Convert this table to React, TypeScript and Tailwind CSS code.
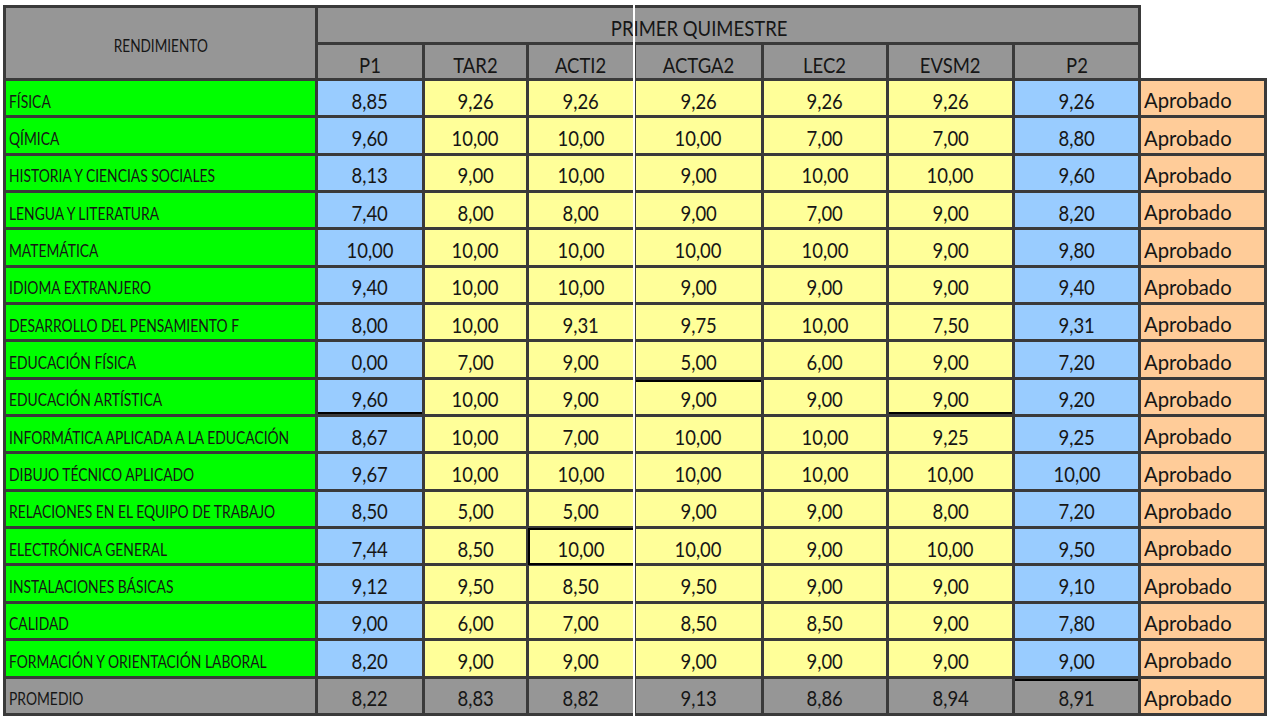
import React from 'react';

const rows: string[][] = [
  ['FÍSICA', '8,85', '9,26', '9,26', '9,26', '9,26', '9,26', '9,26'],
  ['QÍMICA', '9,60', '10,00', '10,00', '10,00', '7,00', '7,00', '8,80'],
  ['HISTORIA Y CIENCIAS SOCIALES', '8,13', '9,00', '10,00', '9,00', '10,00', '10,00', '9,60'],
  ['LENGUA Y LITERATURA', '7,40', '8,00', '8,00', '9,00', '7,00', '9,00', '8,20'],
  ['MATEMÁTICA', '10,00', '10,00', '10,00', '10,00', '10,00', '9,00', '9,80'],
  ['IDIOMA EXTRANJERO', '9,40', '10,00', '10,00', '9,00', '9,00', '9,00', '9,40'],
  ['DESARROLLO DEL PENSAMIENTO F', '8,00', '10,00', '9,31', '9,75', '10,00', '7,50', '9,31'],
  ['EDUCACIÓN FÍSICA', '0,00', '7,00', '9,00', '5,00', '6,00', '9,00', '7,20'],
  ['EDUCACIÓN ARTÍSTICA', '9,60', '10,00', '9,00', '9,00', '9,00', '9,00', '9,20'],
  ['INFORMÁTICA APLICADA A LA EDUCACIÓN', '8,67', '10,00', '7,00', '10,00', '10,00', '9,25', '9,25'],
  ['DIBUJO TÉCNICO APLICADO', '9,67', '10,00', '10,00', '10,00', '10,00', '10,00', '10,00'],
  ['RELACIONES EN EL EQUIPO DE TRABAJO', '8,50', '5,00', '5,00', '9,00', '9,00', '8,00', '7,20'],
  ['ELECTRÓNICA GENERAL', '7,44', '8,50', '10,00', '10,00', '9,00', '10,00', '9,50'],
  ['INSTALACIONES BÁSICAS', '9,12', '9,50', '8,50', '9,50', '9,00', '9,00', '9,10'],
  ['CALIDAD', '9,00', '6,00', '7,00', '8,50', '8,50', '9,00', '7,80'],
  ['FORMACIÓN Y ORIENTACIÓN LABORAL', '8,20', '9,00', '9,00', '9,00', '9,00', '9,00', '9,00'],
];

const promedio = ['8,22', '8,83', '8,82', '9,13', '8,86', '8,94', '8,91'];
const heads = ['P1', 'TAR2', 'ACTI2', 'ACTGA2', 'LEC2', 'EVSM2', 'P2'];

const cell = 'border-[3px] border-[#3a3a3a] p-0 leading-none whitespace-nowrap overflow-hidden';

// leftover cell-selection marks from the spreadsheet
function mark(i: number, j: number) {
  if (i === 12 && j === 2) return 'outline-2 -outline-offset-2 outline-black';
  if (i === 8 && j === 3) return 'shadow-[inset_0_2px_0_#000]';
  if (i === 8 && (j === 0 || j === 5)) return 'shadow-[inset_0_-2px_0_#000]';
  return '';
}

// narrow, Calibri-like text: Lato squeezed horizontally
function Sq({ children }: { children: React.ReactNode }) {
  return <span className="inline-block origin-center scale-x-[0.84]">{children}</span>;
}

function Label({ text }: { text: string }) {
  return <span className="inline-block origin-left scale-x-[0.77]">{text}</span>;
}

function Status() {
  return (
    <td className={`${cell} bg-[#ffcc99] pl-[3px] pt-[4px] text-left text-[22px]`}>
      <span className="inline-block origin-left scale-x-[0.92]">Aprobado</span>
    </td>
  );
}

export default function App() {
  return (
    <div className="relative h-[720px] w-[1280px] overflow-hidden bg-white pl-[3px] pt-[5px] font-['Lato',sans-serif] text-[#161616]">
      <table className="w-[1261px] table-fixed border-collapse">
        <colgroup>
          <col className="w-[312px]" />
          <col className="w-[107px]" />
          <col className="w-[104px]" />
          <col className="w-[107px]" />
          <col className="w-[128px]" />
          <col className="w-[125px]" />
          <col className="w-[126px]" />
          <col className="w-[126px]" />
          <col className="w-[126px]" />
        </colgroup>
        <thead>
          <tr className="h-[37px]">
            <th rowSpan={2} className={`${cell} bg-[#969696] pt-[4px] text-[17px] font-normal`}>
              <span className="inline-block scale-x-[0.8]">RENDIMIENTO</span>
            </th>
            <th colSpan={7} className={`${cell} bg-[#969696] pr-[58px] pt-[5px] text-[22px] font-normal`}>
              <Sq>PRIMER QUIMESTRE</Sq>
            </th>
            <th className="p-0" />
          </tr>
          <tr className="h-[36px]">
            {heads.map((h) => (
              <th key={h} className={`${cell} bg-[#969696] pt-[6px] text-[22px] font-normal`}>
                <Sq>{h}</Sq>
              </th>
            ))}
            <th className="p-0" />
          </tr>
        </thead>
        <tbody>
          {rows.map((r, i) => (
            <tr key={r[0]} className="h-[37.35px]">
              <td className={`${cell} bg-[#00ff00] pl-[3px] pt-[5px] text-left text-[18px]`}>
                <Label text={r[0]} />
              </td>
              {r.slice(1).map((v, j) => (
                <td
                  key={j}
                  className={`${cell} pt-[5px] text-center text-[22px] ${j === 0 || j === 6 ? 'bg-[#99ccff]' : 'bg-[#ffff99]'} ${mark(i, j)}`}
                >
                  <Sq>{v}</Sq>
                </td>
              ))}
              <Status />
            </tr>
          ))}
          <tr className="h-[37.35px]">
            <td className={`${cell} bg-[#969696] pl-[3px] pt-[5px] text-left text-[18px]`}>
              <Label text="PROMEDIO" />
            </td>
            {promedio.map((v, j) => (
              <td
                key={j}
                className={`${cell} bg-[#969696] pt-[5px] text-center text-[22px] ${j === 6 ? 'shadow-[inset_0_2px_0_#000]' : ''}`}
              >
                <Sq>{v}</Sq>
              </td>
            ))}
            <Status />
          </tr>
        </tbody>
      </table>
      <div className="absolute left-[633px] top-0 h-[720px] w-[2px] bg-white" />
    </div>
  );
}
